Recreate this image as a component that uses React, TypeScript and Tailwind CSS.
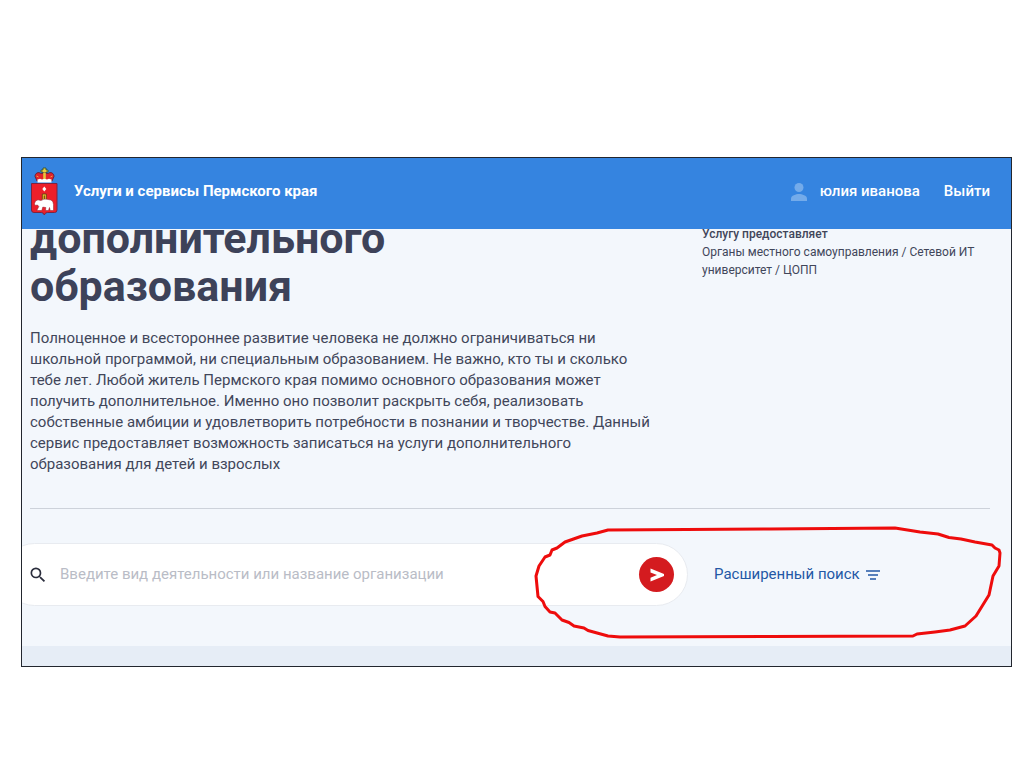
import { MdSearch } from "react-icons/md";

const CoatOfArms = () => {
	return (
		<svg viewBox="0 0 28 50" className="h-[50px] w-7" aria-hidden="true">
			<path d="M13 1h3v2h2v2h-2v3h-3V5h-2V3h2z" fill="#e8cf3f" stroke="#2f4d2c" strokeWidth="0.8" />
			<path
				d="M7 14 5 9.500C5 6 8.500 4.500 11 6.500l3.500-.500 3.500.500c2.500-2 6-.500 6 3L22 14z"
				fill="#e0222c"
				stroke="#5a1a2c"
				strokeWidth="0.8"
			/>
			<path d="M13.200 6h2.600v7h-2.600z" fill="#e9c53a" />
			<path d="M6.500 9l2 1M20.500 10l2-1" stroke="#f2a13a" strokeWidth="1" />
			<path d="M7.500 12.500l2.500-.800 2 .800 2.500-.800 2.500.800 2-.800 2.500.800v3h-14z" fill="#fff" />
			<path
				d="M1.500 16.500h25.500V43q0 2.500-2.500 2.500h-7.200q-2.200 0-3 2.500-.800-2.500-3-2.500H4q-2.500 0-2.500-2.500z"
				fill="#ec1f2a"
				stroke="#7c2440"
				strokeWidth="1"
			/>
			<path d="M14.300 19.500l2 2.500-2 2.500-2-2.500z" fill="#fff" />
			<path d="M12.300 27h4v6.500h-4z" fill="#f0c52e" stroke="#5b3a12" strokeWidth="0.8" />
			<path d="M14.300 28.500v4" stroke="#5b3a12" strokeWidth="1" />
			<path
				d="M4.500 36.500 5.500 34l2.500-1.200 3 .700q3-2 6-1.200l4 .700q2.500 1.200 2.500 4.500v6h-3.300l-.700-3-1 3h-3l.300-3-3-.400-1 3.400H6.800l2-4-1.300-1.500-2.500.500z"
				fill="#fff"
				stroke="#8c1d2b"
				strokeWidth="0.5"
			/>
		</svg>
	);
};

const SiteHeader = () => {
	return (
		<header className="relative z-10 flex h-[71px] items-center justify-between bg-[#3584e0] pr-[21px] pb-1 pl-2 text-white">
			<a href="#" className="flex items-center gap-4 text-[15px] font-bold">
				<CoatOfArms />
				<span>Услуги и сервисы Пермского края</span>
			</a>

			<nav className="flex items-center gap-6 text-[15px] font-medium">
				<a href="#" className="flex items-center gap-3">
					<svg viewBox="0 0 18 18" className="size-[18px]" aria-hidden="true">
						<circle cx="9" cy="4.500" r="4.500" fill="#74abea" />
						<path d="M1 18v-2.500C1 12.500 6 11 9 11s8 1.500 8 4.500V18z" fill="#74abea" />
					</svg>
					юлия иванова
				</a>
				<button type="button">Выйти</button>
			</nav>
		</header>
	);
};

const Intro = () => {
	return (
		<section className="-mt-[15px] grid grid-cols-[7fr_3fr] border-b border-[#cdd2da] pb-[33px]">
			<div className="min-w-0">
				<h1 className="text-[43px] leading-[48px] font-bold text-[#3d4259]">
					дополнительного
					<br />
					образования
				</h1>
				<p className="mt-[18px] text-[15px] leading-[21px] whitespace-nowrap">
					Полноценное и всестороннее развитие человека не должно ограничиваться ни
					<br />
					школьной программой, ни специальным образованием. Не важно, кто ты и сколько
					<br />
					тебе лет. Любой житель Пермского края помимо основного образования может
					<br />
					получить дополнительное. Именно оно позволит раскрыть себя, реализовать
					<br />
					собственные амбиции и удовлетворить потребности в познании и творчестве. Данный
					<br />
					сервис предоставляет возможность записаться на услуги дополнительного
					<br />
					образования для детей и взрослых
				</p>
			</div>

			<aside className="min-w-0 pt-[11px] text-[12px] leading-[18px] whitespace-nowrap">
				<h2 className="font-medium">Услугу предоставляет</h2>
				<p>
					Органы местного самоуправления / Сетевой ИТ
					<br />
					университет / ЦОПП
				</p>
			</aside>
		</section>
	);
};

const Marker = () => {
	return (
		<svg
			viewBox="534 525 468 114"
			className="pointer-events-none absolute top-4 left-[504px] h-[114px] w-[468px]"
			aria-hidden="true"
		>
			<path
				d="M608 530L770 529 895 528 920 532 938 534 949 537.500 961 539 975 542 992 545 995 548 999 550 1000 553 999 566 993 576 989 595 976 616 965 626 950 630 935 632 917 634 913 636 770 636.500 620 637 608 636 588 630.500 584 628 574 626 569 622.500 562 620 555 613 550 612 545 606.500 543 601.500 538 596.500 536 576 539 566 545 557 550 555 552 550 557 548 565 542 582 536 597 533z"
				fill="none"
				stroke="#ee0c0c"
				strokeWidth="3"
				strokeLinejoin="round"
			/>
		</svg>
	);
};

const Search = () => {
	return (
		<section className="grid grid-cols-[7fr_3fr] items-center pt-[34px] pb-10">
			<form className="mr-[14px] -ml-[27px] flex h-[63px] items-center rounded-full border border-[#e8ebf0] bg-white pr-[13px] pl-6">
				<label htmlFor="search">
					<MdSearch className="size-5 text-[#2b2e3d]" title="Поиск" />
				</label>
				<input
					id="search"
					type="search"
					placeholder="Введите вид деятельности или название организации"
					className="ml-3 min-w-0 flex-1 text-[15px] outline-none placeholder:text-[#b9bcc6]"
				/>
				<button
					type="submit"
					aria-label="Найти"
					className="flex size-[35px] items-center justify-center rounded-full bg-[#d41b1f]"
				>
					<svg viewBox="0 0 14 14" className="size-[14px]" aria-hidden="true">
						<path d="M.500 .500 14 6v2L.500 13.500v-3.800L7 7.100.500 4.500z" fill="#fff" />
					</svg>
				</button>
			</form>

			<a href="#" className="ml-3 flex items-center gap-[6px] text-[15px] text-[#2358a5]">
				Расширенный поиск
				<svg viewBox="0 0 14 10" className="h-[10px] w-[14px]" aria-hidden="true">
					<path d="M0 1h14M2 5h10M4 9h6" stroke="#2358a5" strokeWidth="1.600" />
				</svg>
			</a>
		</section>
	);
};

const App = () => {
	return (
		<div className="min-h-screen bg-white pt-[157px] pr-3 pl-[21px] font-['Roboto',sans-serif] text-[#41465a]">
			<div className="overflow-hidden border border-[#22262e] bg-[#f3f7fc]">
				<SiteHeader />
				<main className="pr-[21px] pl-2">
					<Intro />
					<div className="relative">
						<Search />
						<Marker />
					</div>
				</main>
				<div className="h-5 bg-[#e6edf6]" />
			</div>
		</div>
	);
};

export default App;
